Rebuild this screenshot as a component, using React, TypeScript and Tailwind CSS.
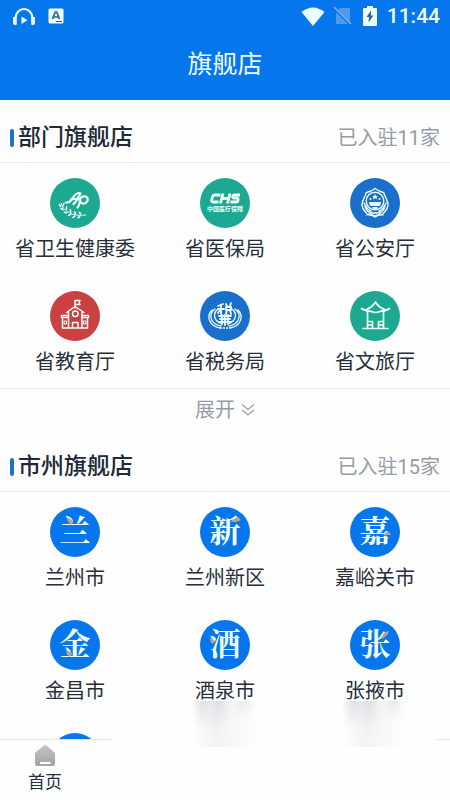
import type { ReactNode } from "react";

const line = {
  fill: "none",
  stroke: "currentColor",
  strokeWidth: 1.5,
  strokeLinecap: "round" as const,
  strokeLinejoin: "round" as const,
};

function HealthIcon() {
  return (
    <svg viewBox="0 0 50 50" className="size-full" aria-hidden="true">
      <g {...line} strokeWidth={2.2}>
        <path d="M16 24.500c4 .5 5-2 7-5s4-4.500 6.500-4.500-.5 2.500-1.500 4.500-2 5-4.500 6.500" />
        <path d="M21 21.500c4-1.500 6 .5 9-.5 1.500-2.500 3.500-3 5.500-2.500 3 .8 3 5.500-.5 6.800-3.500 1.200-5-1-5-4.300-.2 4-1 7-2.500 8.500" />
      </g>
      <path d="M11 25c2 8 11 14 25 12" {...line} strokeWidth={0.9} />
      <g fill="currentColor">
        <ellipse cx="10" cy="27.500" rx=".9" ry="2.100" transform="rotate(-35 10 27.500)" />
        <ellipse cx="12" cy="31" rx=".9" ry="2.100" transform="rotate(-60 12 31)" />
        <ellipse cx="15.500" cy="34.500" rx=".9" ry="2.100" transform="rotate(-75 15.500 34.500)" />
        <ellipse cx="19.500" cy="37" rx=".9" ry="2.100" transform="rotate(70 19.500 37)" />
        <ellipse cx="24" cy="38.700" rx=".9" ry="2.100" transform="rotate(60 24 38.700)" />
        <ellipse cx="29" cy="39" rx=".9" ry="2" transform="rotate(50 29 39)" />
        <ellipse cx="13.500" cy="26.500" rx=".9" ry="2" transform="rotate(20 13.500 26.500)" />
        <ellipse cx="16.500" cy="30" rx=".9" ry="2" transform="rotate(5 16.500 30)" />
        <ellipse cx="20.500" cy="33" rx=".9" ry="2" transform="rotate(-10 20.500 33)" />
        <ellipse cx="25" cy="34.800" rx=".9" ry="2" transform="rotate(-25 25 34.800)" />
        <ellipse cx="30" cy="35.200" rx=".9" ry="1.900" transform="rotate(-40 30 35.200)" />
      </g>
    </svg>
  );
}

function InsuranceIcon() {
  return (
    <span className="flex flex-col items-center">
      <svg viewBox="0 0 32 11" className="h-[11px] w-8" aria-label="CHS" role="img">
        <g fill="none" stroke="currentColor" strokeWidth="2.8" strokeLinejoin="round">
          <path d="M11.500 2H5.500Q4 2 3.600 3.500L2.600 7.500Q2.300 9 4 9H9.500" />
          <path d="M14 .5L11.500 10.500M21 .5L18.500 10.500M13 5.500H20" />
          <path d="M31 2H25.500Q24 2 23.800 3.500 23.600 5.200 25 5.200H28Q29.400 5.200 29 7.200 28.700 9 27 9H21.500" />
        </g>
      </svg>
      <span className="text-[6px] leading-[9px] font-bold whitespace-nowrap">中国医疗保障</span>
    </span>
  );
}

function PoliceIcon() {
  return (
    <svg viewBox="0 0 50 50" className="size-full" aria-hidden="true">
      <g {...line} strokeWidth={1.4}>
        <path d="M25 10.500l4 2.500c2 1 4 .5 5 2 .5 4 4 7 4 12s-4 7-5 9l-3 1c-3 0-4 2-5 2s-2-2-5-2l-3-1c-1-2-5-4-5-9s3.500-8 4-12c1-1.500 3-1 5-2z" />
        <circle cx="25" cy="23" r="8.800" />
        <path d="M15 28c1 4 4 7 8 7h4c4 0 7-3 8-7M17 37c3-2 5 0 8 1 3-1 5-3 8-1M14 25c2 4 4 7 7 8M36 25c-2 4-4 7-7 8" />
      </g>
      <g fill="currentColor">
        <path d="M25 16l1 2h2l-1.500 1.300.5 2-2-1.100-2 1.100.5-2L22 18h2z" />
        <circle cx="20.500" cy="21" r="1" />
        <circle cx="29.500" cy="21" r="1" />
        <path d="M19 24h12l-1 4H20zM22 29h6l-1 2h-4z" />
      </g>
    </svg>
  );
}

function SchoolIcon() {
  return (
    <svg viewBox="0 0 50 50" className="size-full" aria-hidden="true">
      <g {...line}>
        <path d="M25 17V9.500h5l-1 2 1 2h-5" />
        <path d="M16.500 21.500L25 15.500l9 6M18.500 21v16M32 21v16" />
        <circle cx="25.300" cy="22.800" r="2.800" />
        <path d="M18 24.500h-6.500v2H18M32 24.500h6.500v2H32M12.500 27v10h25V27M22.500 37v-5.500h5.500V37" />
        <path d="M14.500 30h2v3h-2zM34 30h2v3h-2z" strokeWidth={1} />
      </g>
    </svg>
  );
}

function TaxIcon() {
  return (
    <svg viewBox="0 0 50 50" className="size-full" aria-hidden="true">
      <g {...line} strokeWidth={1.3}>
        <path d="M15 18c-7 5-5 15 6 17M18 18c-6 5-4 12 4 15M12 19c-6 6-3 16 8 18" />
        <path d="M35 18c7 5 5 15-6 17M32 18c6 5 4 12-4 15M38 19c6 6 3 16-8 18" />
      </g>
      <g {...line} strokeWidth={1.8}>
        <path d="M23 13l-5 2M18 18h6M21 14v9M21 18l-3 4M26 13l1 2M31 12l-1 3M26 16h5v3h-5zM27 19l-1 4M30 19l1 4" />
        <path d="M19 25h12M20 28h10M22 24v9M25 24v10M28 24v9M19 31h12" />
      </g>
      <path d="M20 37h10" stroke="currentColor" strokeWidth="1.500" strokeDasharray="2 1" />
    </svg>
  );
}

function PavilionIcon() {
  return (
    <svg viewBox="0 0 50 50" className="size-full" aria-hidden="true">
      <g {...line} strokeWidth={1.7}>
        <path d="M25.500 11l1 1.500c2 3 5 5 8 6 2 .7 3.500.3 5-1M25.500 11l-1 1.500c-2 3-5 5-8 6-2 .7-3.500.3-5-1M16 20c5-1 6 1.500 9.500 1.500S30 19 35 20" />
        <path d="M17.500 20.500V37M33.500 20.500V37M13 37.500h25M17.500 30.500h5v7M33.500 30.500h-5v7M18 34h4M29 34h4" />
      </g>
    </svg>
  );
}

/* A calligraphic initial with one golden stroke. */
function CityGlyph({ char, accent }: { char: string; accent: string }) {
  return (
    <span className="relative flex size-full justify-center font-['Noto_Serif_CJK_SC','Source_Han_Serif_SC','Noto_Sans_CJK_SC',serif] text-[31px] leading-[44px] font-bold">
      {char}
      <svg viewBox="0 0 50 50" className="absolute inset-0 size-full" aria-hidden="true">
        <path d={accent} fill="#b7a58e" />
      </svg>
    </span>
  );
}

type Shop = { name: string; color: string; icon: ReactNode };

const departments: Shop[] = [
  { name: "省卫生健康委", color: "bg-[#1da991]", icon: <HealthIcon /> },
  { name: "省医保局", color: "bg-[#1da991]", icon: <InsuranceIcon /> },
  { name: "省公安厅", color: "bg-[#1b6fcc]", icon: <PoliceIcon /> },
  { name: "省教育厅", color: "bg-[#cb4040]", icon: <SchoolIcon /> },
  { name: "省税务局", color: "bg-[#1b6fcc]", icon: <TaxIcon /> },
  { name: "省文旅厅", color: "bg-[#1da991]", icon: <PavilionIcon /> },
];

const blue = "bg-[#0676ed]";

const cities: Shop[] = [
  { name: "兰州市", color: blue, icon: <CityGlyph char="兰" accent="M16 10c4 1 7 3 7 6l-3 2c-1-3-3-5-4-8z" /> },
  { name: "兰州新区", color: blue, icon: <CityGlyph char="新" accent="M31 14l6-4 4 3c-3 2-7 2-9 2z" /> },
  { name: "嘉峪关市", color: blue, icon: <CityGlyph char="嘉" accent="M33 28l5-4 3 4z" /> },
  { name: "金昌市", color: blue, icon: <CityGlyph char="金" accent="M16 30c3 1 6 2 6 5l-3 2c-1-2-2-4-3-7z" /> },
  { name: "酒泉市", color: blue, icon: <CityGlyph char="酒" accent="M10 18c3 1 5 2 5 4l-3 2c-1-2-2-3-2-6z" /> },
  { name: "张掖市", color: blue, icon: <CityGlyph char="张" accent="M31 18l4-6 4-1c-1 4-4 6-7 8z" /> },
  { name: "", color: blue, icon: null },
];

function SectionHeader({ title, count }: { title: string; count: number }) {
  return (
    <div className="flex h-[63px] items-center justify-between border-b border-[#e7e8ea] px-2.5 pt-3.5">
      <h2 className="flex items-center gap-1 text-[23px] leading-8 font-medium text-[#1e2939]">
        <span className="h-[18px] w-1 rounded-sm bg-[#1c70cf]" />
        {title}
      </h2>
      <p className="text-xl text-[#959ca6]">已入驻{count}家</p>
    </div>
  );
}

function ShopGrid({ shops }: { shops: Shop[] }) {
  return (
    <ul className="grid grid-cols-3 gap-y-[27px] pt-[15px] pb-[11px]">
      {shops.map((shop) => (
        <li key={shop.name}>
          <a href="#" className="flex flex-col items-center gap-1.5">
            <span className={`flex size-[50px] items-center justify-center overflow-hidden rounded-full text-[#eefffa] ${shop.color}`}>
              {shop.icon}
            </span>
            <span className="h-[30px] text-xl leading-[30px] whitespace-nowrap text-[#272e3a]">{shop.name}</span>
          </a>
        </li>
      ))}
    </ul>
  );
}

function StatusBar() {
  return (
    <div className="flex h-8 items-center justify-between px-2.5 text-[#eefdff]">
      <div className="flex items-center gap-3 pl-0.5">
        <svg viewBox="0 0 24 20" className="h-5 w-6" aria-hidden="true">
          <path d="M3.500 18v-6a8.500 9 0 0 1 17 0v6" fill="none" stroke="currentColor" strokeWidth="2.200" />
          <path d="M1 11h3.500v8H3q-2 0-2-2zM23 11h-3.500v8H21q2 0 2-2zM9.500 10.500l6 3.700-6 3.700z" fill="currentColor" />
        </svg>
        <svg viewBox="0 0 16 16" className="size-4" aria-hidden="true">
          <rect x=".5" y=".5" width="15" height="15" rx="1.500" fill="currentColor" />
          <path d="M4.500 11L7.300 4h1.400l2.800 7M5.500 9h5" fill="none" stroke="#24649f" strokeWidth="1.700" />
          <path d="M8 13.500h6" stroke="#24649f" />
        </svg>
      </div>
      <div className="flex items-center">
        <svg viewBox="0 0 24 19" className="h-[19px] w-6" aria-hidden="true">
          <path d="M.5 5Q12-4 23.500 5L12 19z" fill="currentColor" />
        </svg>
        <svg viewBox="0 0 20 20" className="ml-2 size-5" aria-hidden="true">
          <path d="M7 2h10v16H3V6z" fill="#5198ec" />
          <path d="M1 2l17 17" stroke="#0676ed" strokeWidth="3" />
          <path d="M1 1l17 17" stroke="#83b8f2" strokeWidth="1.300" />
        </svg>
        <svg viewBox="0 0 14 20" className="ml-2.5 h-5 w-3.5" aria-hidden="true">
          <path d="M4 0h6v2h3q1 0 1 1v16q0 1-1 1H1q-1 0-1-1V3q0-1 1-1h3z" fill="currentColor" />
          <path d="M8 4.500L3.500 11H6l-.5 5.500L10.500 9.500H8z" fill="#2465ac" />
        </svg>
        <time className="ml-2.5 text-[21px] leading-8 font-medium">11:44</time>
      </div>
    </div>
  );
}

/* Soft shadow that trails below a city name, densest on its left side. */
function Trail() {
  return (
    <span className="mx-auto flex w-16 gap-1 overflow-hidden bg-linear-to-r from-transparent via-[#f2f3f4] via-35% to-transparent pl-1">
      <span className="-mt-2 h-9 w-3 bg-linear-to-b from-[#d3d6da] to-transparent blur-[4px]" />
      <span className="-mt-2 h-9 w-3 bg-linear-to-b from-[#d3d6da] to-transparent blur-[4px]" />
      <span className="-mt-2 ml-2 h-6 w-3 bg-linear-to-b from-[#d9dce0] to-transparent blur-[4px]" />
    </span>
  );
}

export default function App() {
  return (
    <div className="relative flex h-screen flex-col overflow-hidden bg-[#fefefe] font-[Roboto,'Noto_Sans_CJK_SC',sans-serif]">
      <header className="h-[100px] shrink-0 bg-[#0676ed]">
        <StatusBar />
        <h1 className="text-center text-[25px] leading-[66px] text-[#eefdff]">旗舰店</h1>
      </header>

      <main className="min-h-0 flex-1 overflow-hidden">
        <section>
          <SectionHeader title="部门旗舰店" count={11} />
          <ShopGrid shops={departments} />
          <button type="button" className="flex h-[41px] w-full items-center justify-center gap-1.5 border-t border-[#e7e8ea] pt-0.5 text-xl text-[#959ca6]">
            展开
            <svg viewBox="0 0 14 14" className="size-3.5" fill="none" stroke="currentColor" strokeWidth="1.200" aria-hidden="true">
              <path d="M1 1.500l6 5 6-5M1 7l6 5 6-5" />
            </svg>
          </button>
        </section>
        <section>
          <SectionHeader title="市州旗舰店" count={15} />
          <ShopGrid shops={cities} />
        </section>
      </main>

      <nav className="relative flex h-[61px] shrink-0 border-t border-[#e3e4e6] bg-[#fefefe]">
        <span className="absolute -top-5 right-[3%] left-1/4 h-6 bg-[#fefefe]" />
        <a href="#" className="flex w-1/5 flex-col items-center pt-[5px] text-[17px] leading-[30px] text-[#272e3a]">
          <svg viewBox="0 0 20 22" className="h-[22px] w-5" aria-hidden="true">
            <defs>
              <linearGradient id="home" x1="0" y1="0" x2="0" y2="1">
                <stop stopColor="#c4c4c4" />
                <stop offset="1" stopColor="#a3a3a3" />
              </linearGradient>
            </defs>
            <path d="M8.500.8q1.500-1.300 3 0L19 7q1 1 1 2v10q0 2-2 2H2q-2 0-2-2V9q0-1 1-2z" fill="url(#home)" />
            <path d="M5 18h10.500" stroke="#fff" strokeWidth="2" />
          </svg>
          首页
        </a>
      </nav>

      <div className="pointer-events-none absolute inset-x-0 bottom-[53px] grid h-[46px] grid-cols-3" aria-hidden="true">
        <span />
        <Trail />
        <Trail />
      </div>
    </div>
  );
}
